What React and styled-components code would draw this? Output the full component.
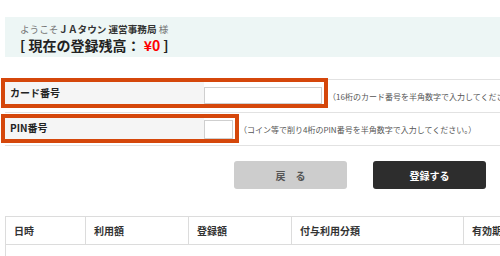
import React from 'react';
import styled, { createGlobalStyle } from 'styled-components';

const GlobalStyle = createGlobalStyle`
  html, body {
    margin: 0;
    padding: 0;
    overflow: hidden;
    background: #fff;
  }
  body {
    font-family: "Noto Sans CJK JP", "Noto Sans", sans-serif;
    color: #333;
  }
`;

const columns = [
  { label: '日時', width: 80 },
  { label: '利用額', width: 103 },
  { label: '登録額', width: 103 },
  { label: '付与利用分類', width: 172 },
  { label: '有効期限', width: 110 },
];

const App = () => (
  <Page>
    <GlobalStyle />

    <Welcome>
      <Greeting>
        ようこそ<strong>ＪＡタウン 運営事務局</strong> 様
      </Greeting>
      <Balance>
        [ 現在の登録残高： <em>¥0</em> ]
      </Balance>
    </Welcome>

    <FormTable>
      <FormRow>
        <Field $top={-2} $height={30}>
          <Label>カード番号</Label>
          <Input $width={118} $height={17} />
        </Field>
        <Note>（16桁のカード番号を半角数字で入力してください。）</Note>
      </FormRow>
      <FormRow>
        <Field $top={1} $height={29}>
          <Label>PIN番号</Label>
          <Input $width={29} $height={19} />
        </Field>
        <Note>（コイン等で削り4桁のPIN番号を半角数字で入力してください。）</Note>
      </FormRow>
    </FormTable>

    <Buttons>
      <Button>戻　る</Button>
      <Button $primary>登録する</Button>
    </Buttons>

    <History>
      <thead>
        <tr>
          {columns.map((c) => (
            <th key={c.label} style={{ width: c.width }}>
              {c.label}
            </th>
          ))}
        </tr>
      </thead>
      <tbody>
        <tr>
          <td colSpan={5}>対象期間のご利用履歴はありません。</td>
        </tr>
      </tbody>
    </History>
  </Page>
);

export default App;

//

const Page = styled.div`
  width: 600px;
  padding: 17px 0 0 5px;
`;

const Welcome = styled.section`
  display: flex;
  flex-direction: column;
  justify-content: center;
  gap: 2px;
  width: 495px;
  height: 40px;
  box-sizing: border-box;
  padding: 2px 0 0 15px;
  background: #edf6f5;
`;

const Greeting = styled.p`
  margin: 0;
  font-size: 9.6px;
  line-height: 12px;
  color: #777;

  & strong {
    font-weight: 700;
    color: #333;
  }
`;

const Balance = styled.p`
  margin: 0;
  font-size: 14px;
  line-height: 16px;
  font-weight: 700;
  color: #222;

  & em {
    font-style: normal;
    color: #f00;
  }
`;

const FormTable = styled.div`
  margin-top: 22px;
  border-top: 1px solid #e2e2e2;
`;

const FormRow = styled.div`
  display: flex;
  align-items: flex-start;
  height: 33px;
  box-sizing: border-box;
  border-bottom: 1px solid #e2e2e2;
`;

const Field = styled.div`
  display: flex;
  align-items: flex-end;
  height: ${(p) => p.$height}px;
  box-sizing: border-box;
  margin: ${(p) => p.$top}px 0 0 -4px;
  padding-right: 2px;
  border: 4px solid #d5470b;
`;

const Label = styled.div`
  align-self: stretch;
  display: flex;
  align-items: center;
  width: 199px;
  box-sizing: border-box;
  padding: 0 0 2px 5px;
  background: #f5f5f5;
  font-size: 10px;
  font-weight: 700;
  color: #222;
`;

const Input = styled.input`
  width: ${(p) => p.$width}px;
  height: ${(p) => p.$height}px;
  box-sizing: border-box;
  margin: 0;
  padding: 0;
  border: 1px solid #cfcfcf;
  background: #fff;
`;

const Note = styled.span`
  align-self: center;
  white-space: nowrap;
  font-size: 8px;
  color: #555;
`;

const Buttons = styled.div`
  display: flex;
  gap: 26px;
  width: 495px;
  box-sizing: border-box;
  justify-content: flex-end;
  padding-right: 14px;
  margin-top: 15px;
`;

const Button = styled.button`
  width: 113px;
  height: 28px;
  border: none;
  border-radius: 3px;
  font-family: inherit;
  font-size: 10px;
  font-weight: 700;
  background: ${(p) => (p.$primary ? '#2d2d2d' : '#cdcdcd')};
  color: ${(p) => (p.$primary ? '#fff' : '#555')};
`;

const History = styled.table`
  margin-top: 27px;
  border-collapse: collapse;
  table-layout: fixed;
  width: 568px;

  & th,
  & td {
    border: 1px solid #dcdcdc;
    text-align: left;
    font-size: 10px;
    white-space: nowrap;
  }

  & th {
    height: 28px;
    box-sizing: border-box;
    padding: 0 0 0 8px;
    font-weight: 700;
    color: #333;
  }

  & td {
    padding: 9px 0 9px 9px;
    color: #555;
  }
`;
